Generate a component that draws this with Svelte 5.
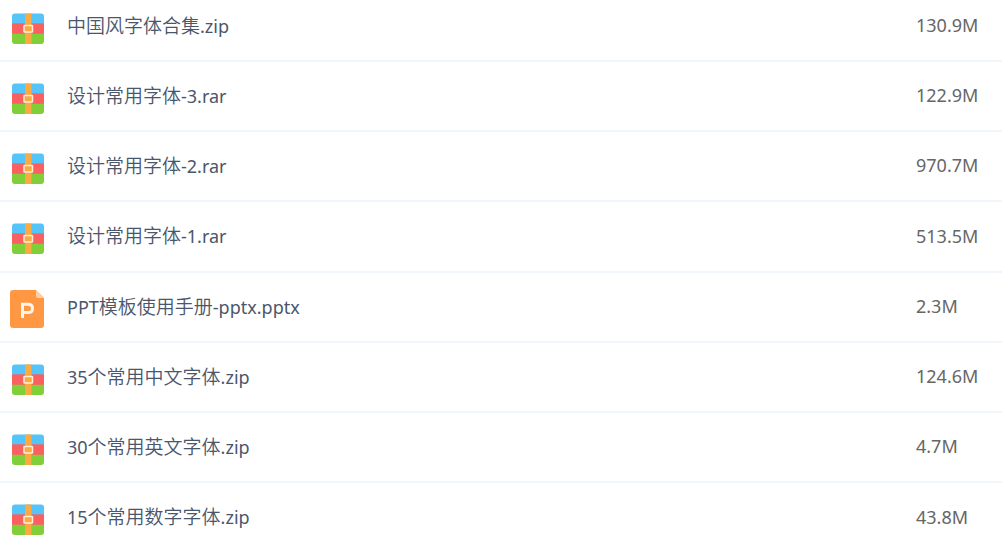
<script>
  const files = [
    { name: '中国风字体合集.zip', size: '130.9M', type: 'zip' },
    { name: '设计常用字体-3.rar', size: '122.9M', type: 'zip' },
    { name: '设计常用字体-2.rar', size: '970.7M', type: 'zip' },
    { name: '设计常用字体-1.rar', size: '513.5M', type: 'zip' },
    { name: 'PPT模板使用手册-pptx.pptx', size: '2.3M', type: 'ppt' },
    { name: '35个常用中文字体.zip', size: '124.6M', type: 'zip' },
    { name: '30个常用英文字体.zip', size: '4.7M', type: 'zip' },
    { name: '15个常用数字字体.zip', size: '43.8M', type: 'zip' }
  ];

  // Han runs are set slightly larger and lighter than the Latin text.
  const runs = (name) => name.split(/(\p{Script=Han}+)/u).filter(Boolean);
  const isHan = (text) => /\p{Script=Han}/u.test(text);
</script>

<table>
  <tbody>
    {#each files as file}
      <tr>
        <td class="icon {file.type}">
          {#if file.type === 'zip'}
            <svg width="32" height="31" viewBox="0 0 32 31" aria-hidden="true">
              <path d="M0 11V3.500q0-3 3-3h26q3 0 3 3V11z" fill="#55c4f8" />
              <path d="M0 10.300h32v11H0z" fill="#fb6060" />
              <path d="M0 20.800h32V28q0 3-3 3H3q-3 0-3-3z" fill="#80ce38" />
              <path d="M13 0.500h6.500V31H13z" fill="#fba941" />
              <rect x="12" y="12.500" width="8.500" height="6.500" rx="0.500" fill="#fba941" stroke="#ffeed8" stroke-width="1.500" />
            </svg>
          {:else}
            <svg width="34" height="38" viewBox="0 0 34 38" aria-hidden="true">
              <path d="M3 0h23l8 8v27q0 3-3 3H3q-3 0-3-3V3q0-3 3-3z" fill="#ff9743" />
              <path d="M26 0l8 8h-6q-2 0-2-2z" fill="#ffcfa5" />
              <path d="M12.500 28V14.200h5.500q4.500 0 4.500 4.200t-4.500 4.200h-5" fill="none" stroke="#fff5ec" stroke-width="3" />
            </svg>
          {/if}
        </td>
        <td>{#each runs(file.name) as run}<span class:han={isHan(run)}>{run}</span>{/each}</td>
        <td class="size">{file.size}</td>
      </tr>
    {/each}
  </tbody>
</table>

<style>
  :global(body) {
    background: #fff;
    overflow: hidden;
  }

  table {
    width: 100%;
    margin-top: -8px;
    border-collapse: separate;
    border-spacing: 0;
    font-family: "Noto Sans", "Noto Sans CJK SC", sans-serif;
    font-size: 18px;
    line-height: 28px;
    color: #4a566c;
  }

  td {
    box-sizing: border-box;
    height: 70px;
    padding: 0 0 2px;
    border-bottom: 2px solid #f1f6fc;
  }

  tr:nth-child(4n) td {
    height: 71px;
  }

  .icon {
    width: 67px;
    padding: 4px 0 0 10px;
  }

  .zip {
    padding-left: 12px;
  }

  svg {
    display: block;
  }

  .han {
    font-family: "Noto Sans CJK SC", sans-serif;
    font-size: 19px;
    font-weight: 350;
  }

  .size {
    width: 86px;
    color: #666;
  }
</style>
